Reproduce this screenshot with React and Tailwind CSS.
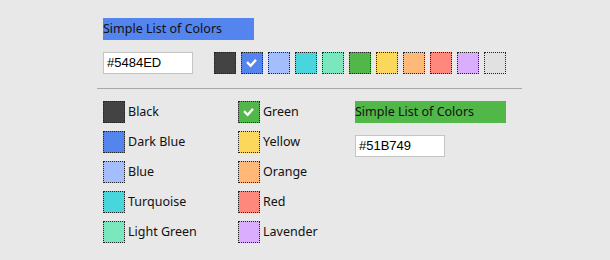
import React from 'react';

const PALETTE = [
  { name: 'Black', hex: '#434343' },
  { name: 'Dark Blue', hex: '#5484ED' },
  { name: 'Blue', hex: '#A4BDFC' },
  { name: 'Turquoise', hex: '#46D6DB' },
  { name: 'Light Green', hex: '#7AE7BF' },
  { name: 'Green', hex: '#51B749' },
  { name: 'Yellow', hex: '#FBD75B' },
  { name: 'Orange', hex: '#FFB878' },
  { name: 'Red', hex: '#FF887C' },
  { name: 'Lavender', hex: '#DBADFF' },
  { name: 'Gray', hex: '#E1E1E1' },
];

const Check = () => (
  <svg viewBox="0 0 22 22" className="w-full h-full">
    <path d="M6.5 11 L9.5 14 L14.5 8.5" fill="none" stroke="#fff" strokeWidth="2.6" strokeLinecap="square" />
  </svg>
);

const Swatch = ({ hex, selected }) => (
  <div
    className="w-[22px] h-[22px] shrink-0 border border-dotted border-[#222]"
    style={{ backgroundColor: hex }}
  >
    {selected && <Check />}
  </div>
);

const Label = ({ bg, children }) => (
  <div className={`w-[151px] h-[22px] flex items-center text-[12.5px] text-[#111] ${bg}`}>{children}</div>
);

const HexInput = ({ value }) => (
  <div className="w-[90px] h-[22px] bg-white border border-[#c4c4c4] flex items-center pl-[3px] text-[13px] text-black font-['Liberation_Sans',sans-serif]">
    {value}
  </div>
);

export default function App() {
  const left = PALETTE.slice(0, 5);
  const right = PALETTE.slice(5, 10);

  return (
    <div className="w-[610px] h-[260px] bg-[#e8e8e8] font-['Noto_Sans',sans-serif] pt-[18px]">
      <div className="pl-[103px]">
        <Label bg="bg-[#5484ED]">Simple List of Colors</Label>
        <div className="flex items-center mt-[12px]">
          <HexInput value="#5484ED" />
          <div className="flex gap-[5px] ml-[21px]">
            {PALETTE.map((c) => (
              <Swatch key={c.name} hex={c.hex} selected={c.name === 'Dark Blue'} />
            ))}
          </div>
        </div>
      </div>

      <div className="ml-[97px] w-[425px] h-px bg-[#a8a8a8] mt-[14px]" />

      <div className="flex pl-[103px] pt-[12px]">
        <div className="flex flex-col gap-[8px] w-[135px]">
          {left.map((c) => (
            <div key={c.name} className="flex items-center gap-[3px] h-[22px] text-[12.5px] text-[#111]">
              <Swatch hex={c.hex} />
              <span>{c.name}</span>
            </div>
          ))}
        </div>
        <div className="flex flex-col gap-[8px] w-[117px]">
          {right.map((c) => (
            <div key={c.name} className="flex items-center gap-[3px] h-[22px] text-[12.5px] text-[#111]">
              <Swatch hex={c.hex} selected={c.name === 'Green'} />
              <span>{c.name}</span>
            </div>
          ))}
        </div>
        <div className="flex flex-col gap-[12px]">
          <Label bg="bg-[#51B749]">Simple List of Colors</Label>
          <HexInput value="#51B749" />
        </div>
      </div>
    </div>
  );
}
